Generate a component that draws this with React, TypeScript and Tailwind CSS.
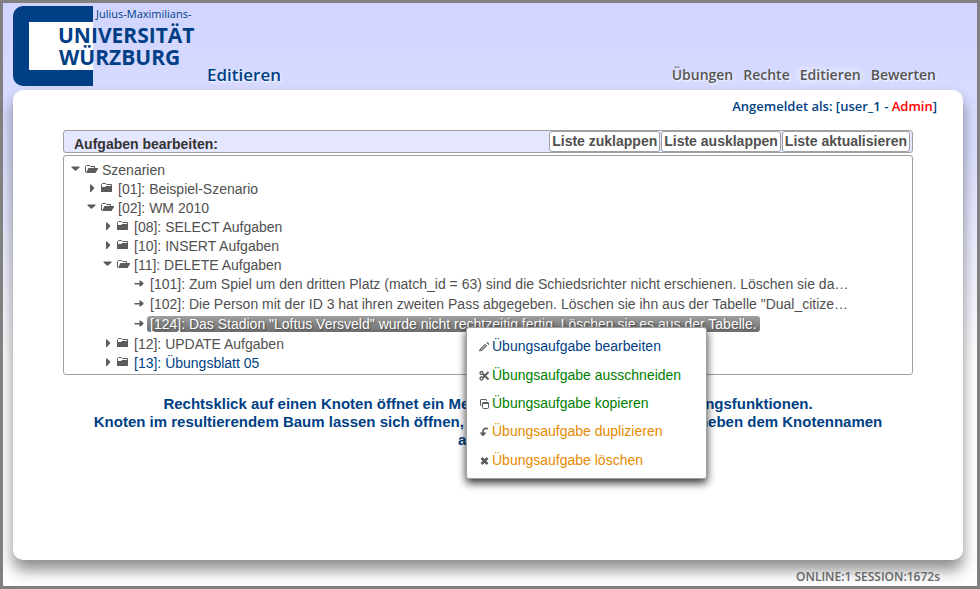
import React, { useState } from 'react';

type NodeKind = 'open' | 'closed' | 'leaf';

interface TreeNode {
  level: 0 | 1 | 2 | 3;
  kind: NodeKind;
  label: string;
  color?: string;
}

const nodes: TreeNode[] = [
  { level: 0, kind: 'open', label: 'Szenarien' },
  { level: 1, kind: 'closed', label: '[01]: Beispiel-Szenario' },
  { level: 1, kind: 'open', label: '[02]: WM 2010' },
  { level: 2, kind: 'closed', label: '[08]: SELECT Aufgaben' },
  { level: 2, kind: 'closed', label: '[10]: INSERT Aufgaben' },
  { level: 2, kind: 'open', label: '[11]: DELETE Aufgaben' },
  {
    level: 3,
    kind: 'leaf',
    label:
      '[101]: Zum Spiel um den dritten Platz (match_id = 63) sind die Schiedsrichter nicht erschienen. Löschen sie da…',
  },
  {
    level: 3,
    kind: 'leaf',
    label:
      '[102]: Die Person mit der ID 3 hat ihren zweiten Pass abgegeben. Löschen sie ihn aus der Tabelle "Dual_citize…',
  },
  {
    level: 3,
    kind: 'leaf',
    label: '[124]: Das Stadion "Loftus Versveld" wurde nicht rechtzeitig fertig. Löschen sie es aus der Tabelle.',
  },
  { level: 2, kind: 'closed', label: '[12]: UPDATE Aufgaben' },
  { level: 2, kind: 'closed', label: '[13]: Übungsblatt 05', color: 'text-[#003f85]' },
];

const indent = ['pl-1', 'pl-5', 'pl-9', 'pl-[52px]'];

function Icon({ children }: { children: React.ReactNode }) {
  return (
    <svg viewBox="0 0 16 16" className="h-4 w-4 shrink-0" fill="#5c5c5c" aria-hidden="true">
      {children}
    </svg>
  );
}

function CaretIcon({ open }: { open: boolean }) {
  return (
    <Icon>{open ? <path d="M3.500 4.500h8v1l-4 3.500-4-3.500z" /> : <path d="M6 3.500h1L10.500 7 7 11H6z" />}</Icon>
  );
}

function NodeIcon({ kind }: { kind: NodeKind }) {
  if (kind === 'leaf') {
    return (
      <Icon>
        <path d="M2.500 7h5V4.500h1l3 2.500v1l-3 2.500h-1V8.500h-5z" />
      </Icon>
    );
  }
  if (kind === 'open') {
    return (
      <Icon>
        <path d="M1.500 10.500v-6l1-1h3l1 1h4V6" fill="none" stroke="#5c5c5c" />
        <path d="M4.500 6H14v1l-2.500 4H2z" />
      </Icon>
    );
  }
  return (
    <Icon>
      <path d="M1.500 6.500V3.500l1-1h3l1 1h5v3" fill="none" stroke="#5c5c5c" />
      <path d="M1 11V6h4l1-1h6v6z" />
    </Icon>
  );
}

const menuItems = [
  {
    label: 'Übungsaufgabe bearbeiten',
    color: 'text-[#003f85]',
    icon: (
      <>
        <path d="M3.500 12l.8-2L9 5.300 10.700 7 6 11.200z" fill="#aaa" stroke="#5c5c5c" />
        <path d="M10.500 4l1-1 2 2-1 1z" />
      </>
    ),
  },
  {
    label: 'Übungsaufgabe ausschneiden',
    color: 'text-[#008000]',
    icon: (
      <g fill="none" stroke="#5c5c5c" strokeWidth="1.300">
        <circle cx="5.500" cy="5" r="1.500" />
        <circle cx="5.500" cy="10.500" r="1.500" />
        <path d="M7 6l5.500 5.500M7 9.500L12.500 4" strokeWidth="1.800" />
      </g>
    ),
  },
  {
    label: 'Übungsaufgabe kopieren',
    color: 'text-[#008000]',
    icon: (
      <g fill="none" stroke="#5c5c5c">
        <path d="M5.500 9.500H5a.5.500 0 0 1-.5-.5V4A.5.500 0 0 1 5 3.500h5a.5.500 0 0 1 .5.500v1" />
        <rect x="6.500" y="6.500" width="6" height="6" rx="1" />
        <path d="M6.500 7h6" strokeWidth="2" />
      </g>
    ),
  },
  {
    label: 'Übungsaufgabe duplizieren',
    color: 'text-[#e68a00]',
    icon: (
      <>
        <path d="M12 4.800C9 3.500 7 5 7 7.500V10" fill="none" stroke="#5c5c5c" strokeWidth="1.700" />
        <path d="M3.500 8.500h7L7 12.500z" />
      </>
    ),
  },
  {
    label: 'Übungsaufgabe löschen',
    color: 'text-[#e68a00]',
    icon: <path d="M5.500 5l6 6M11.500 5l-6 6" stroke="#5c5c5c" strokeWidth="2.600" />,
  },
];

function Logo() {
  return (
    <svg viewBox="0 0 190 80" className="h-20 w-[190px] shrink-0" role="img" aria-label="Universität Würzburg">
      <path d="M10 0H80V80H10A10 10 0 0 1 0 70V10A10 10 0 0 1 10 0Z" fill="#003f85" />
      <rect x="16" y="16" width="64" height="48" fill="#fff" />
      <g fill="#003f85" fontFamily="'Open Sans', 'Noto Sans', sans-serif">
        <text x="83" y="12" fontSize="11">
          Julius-Maximilians-
        </text>
        <text x="45" y="37" fontSize="21" fontWeight="700">
          UNIVERSITÄT
        </text>
        <text x="46" y="59" fontSize="21" fontWeight="700">
          WÜRZBURG
        </text>
      </g>
    </svg>
  );
}

export default function App() {
  const [selected, setSelected] = useState(8);
  const nav = ['Übungen', 'Rechte', 'Editieren', 'Bewerten'];
  return (
    <div className="relative flex min-h-screen flex-col overflow-hidden border-[3px] border-[#808080] bg-white bg-[linear-gradient(to_bottom,#d0d4ff_0px,#dde0ff_150px,#ffffff_360px)] font-['Liberation_Sans',Arial,sans-serif] text-sm text-[#505050]">
      <header className="flex items-end pt-[3px] pr-[41px] pb-1 pl-[10px] font-['Open_Sans','Noto_Sans',sans-serif]">
        <Logo />
        <h1 className="ml-1 text-[17px] leading-[22px] font-semibold text-[#003f85] [text-shadow:1px_1px_2px_#fff]">
          Editieren
        </h1>
        <nav className="ml-auto flex gap-[10px] text-sm leading-[22px] font-semibold text-[#555]">
          {nav.map((item) => (
            <a
              key={item}
              href="#"
              className={
                item === 'Editieren'
                  ? '[text-shadow:0_0_6px_#fff,0_0_10px_#fff]'
                  : '[text-shadow:1px_1px_2px_#fff]'
              }
            >
              {item}
            </a>
          ))}
        </nav>
      </header>

      <main className="mr-[14px] ml-[10px] flex flex-1 flex-col rounded-[10px] bg-white px-[50px] shadow-[0_10px_15px_rgba(0,0,0,0.45)]">
        <p className="-mr-6 flex h-10 items-start justify-end pt-[7px] font-['Open_Sans','Noto_Sans',sans-serif] text-[13px] leading-[18px] font-semibold whitespace-pre text-[#003f85]">
          Angemeldet als: [user_1 - <span className="text-[#ff0000]">Admin</span>]
        </p>

        <section>
          <div className="flex h-[23px] items-center justify-between rounded-[3px] border border-[#a0a0a0] bg-[#e5e6ff] pr-0.5 pl-[10px]">
            <h2 className="pt-1 leading-5 font-bold text-[#333]">Aufgaben bearbeiten:</h2>
            <div className="flex gap-px">
              {['Liste zuklappen', 'Liste ausklappen', 'Liste aktualisieren'].map((label) => (
                <button
                  key={label}
                  type="button"
                  className="h-[21px] rounded-[3px] border border-[#a0a0a0] bg-white px-0.5 pb-px leading-[18px] font-bold"
                >
                  {label}
                </button>
              ))}
            </div>
          </div>

          <ul className="mt-0.5 rounded-[3px] border border-[#a0a0a0] pt-1 pb-0.5">
            {nodes.map((node, i) => (
              <li
                key={node.label}
                className={`flex items-center ${indent[node.level]} ${node.kind === 'leaf' ? 'h-5' : 'h-[19px]'}`}
              >
                {node.kind === 'leaf' ? <span className="w-4" /> : <CaretIcon open={node.kind === 'open'} />}
                <NodeIcon kind={node.kind} />
                <a
                  href="#"
                  onClick={() => setSelected(i)}
                  className={`-ml-px truncate rounded-[3px] px-[3px] leading-4 ${
                    i === selected
                      ? 'bg-linear-to-b from-[#a0a0a0] to-[#707070] text-white [text-shadow:1px_1px_2px_#444]'
                      : (node.color ?? '')
                  }`}
                >
                  {node.label}
                </a>
              </li>
            ))}
          </ul>
        </section>

        <p className="mt-5 text-center text-[15px] leading-[18px] font-bold text-[#003f85]">
          Rechtsklick auf einen Knoten öffnet ein Menü mit allen möglichen Bearbeitungsfunktionen.
          <br />
          Knoten im resultierendem Baum lassen sich öffnen, wenn man auf das Dreieck links neben dem Knotennamen
          <br />
          anklickt.
        </p>
      </main>

      <footer className="flex h-[26px] items-end justify-end pr-[37px] font-['Open_Sans','Noto_Sans',sans-serif] text-xs leading-[18px] font-semibold text-[#666]">
        ONLINE:1 SESSION:1672s
      </footer>

      <ul className="absolute top-[324px] left-[463px] grid h-[152px] w-[241px] grid-rows-5 rounded-[3px] border border-[#a0a0a0] bg-white pt-1 pb-1 shadow-[0_4px_8px_rgba(0,0,0,0.8)]">
        {menuItems.map((item) => (
          <li key={item.label} className="flex">
            <button type="button" className={`flex flex-1 items-center pl-[9px] ${item.color}`}>
              <span className="pt-0.5">
                <Icon>{item.icon}</Icon>
              </span>
              {item.label}
            </button>
          </li>
        ))}
      </ul>
    </div>
  );
}
